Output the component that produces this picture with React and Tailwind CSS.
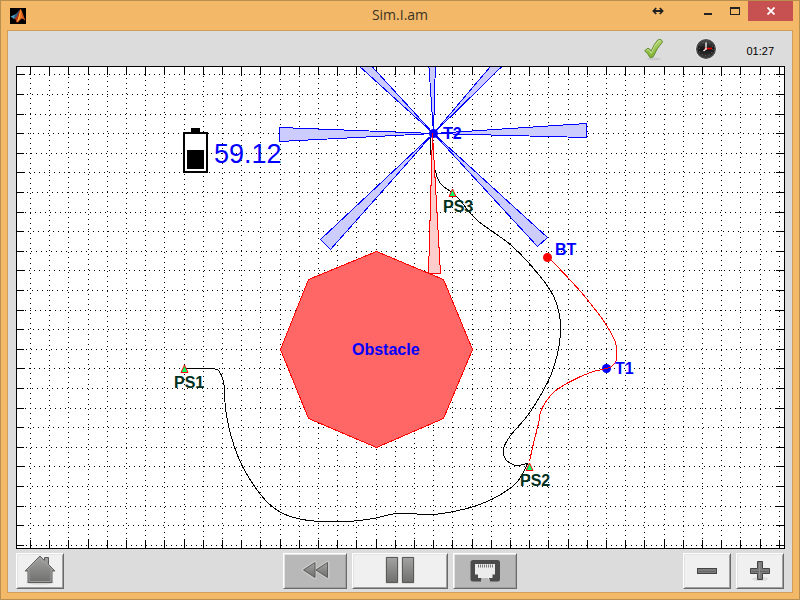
import React, { useState } from 'react';

// Plot area, in plot units
const LEFT = 16;
const TOP = 66;
const RIGHT = 785;
const BOTTOM = 549;

const columns = [...Array(40)].map((_, i) => Math.round(30 + i * 19.2));
const rows = [...Array(25)].map((_, i) => Math.round(74.4 + i * 19.6));

const beams = [
  '433,133 586,123 586,137',
  '433,133 279,127 279,141',
  '433,133 547,237 537,246',
  '433,133 320,239 330,249',
  '433,133 325,35 331,22',
  '433,133 423,-13 437,-13',
  '433,133 529,20 534,34',
];

const outboundPath = [
  [184, 368], [212, 368], [220, 373], [224, 387], [225, 408], [231, 437], [242, 466],
  [260, 494], [277, 510], [297, 518], [320, 521], [347, 521], [373, 518], [397, 513],
  [432, 514], [453, 511], [473, 506], [493, 498], [512, 486], [520, 477], [527, 463],
];

const returnPath = [
  [527, 463], [517, 465], [510, 463], [504, 457], [503, 448], [510, 435], [530, 411],
  [551, 373], [560, 333], [556, 303], [543, 280], [512, 246], [477, 220], [458, 198],
  [450, 191], [443, 186], [438, 180], [435, 171], [430, 152], [430, 134],
];

const plannedPath = [
  [547, 257], [552, 261], [580, 291], [600, 316], [608, 328], [615, 342], [616, 352],
  [616, 360], [611, 366], [606, 368], [590, 372], [568, 382], [552, 393], [541, 409],
  [538, 423], [533, 443], [529, 461],
];

const stations = [
  { name: 'PS1', x: 184, y: 368, labelX: 174, labelY: 388 },
  { name: 'PS2', x: 529, y: 466, labelX: 520, labelY: 486 },
  { name: 'PS3', x: 452, y: 192, labelX: 443, labelY: 212 },
];

const targets = [
  { name: 'T1', x: 615, y: 374 },
  { name: 'T2', x: 443, y: 139 },
  { name: 'BT', x: 555, y: 255 },
];

// Catmull-Rom spline through the points
const smooth = (points) => {
  let d = `M${points[0][0] + 0.5} ${points[0][1] + 0.5}`;
  for (let i = 0; i < points.length - 1; i++) {
    const p0 = points[i - 1] || points[i];
    const p1 = points[i];
    const p2 = points[i + 1];
    const p3 = points[i + 2] || p2;
    const c = [0, 1].map((k) => p1[k] + (p2[k] - p0[k]) / 6 + 0.5);
    const e = [0, 1].map((k) => p2[k] - (p3[k] - p1[k]) / 6 + 0.5);
    d += `C${c[0]} ${c[1]} ${e[0]} ${e[1]} ${p2[0] + 0.5} ${p2[1] + 0.5}`;
  }
  return d;
};

const Grid = () => (
  <g stroke="#000" shapeRendering="crispEdges">
    {columns.map((x, i) => (
      <g key={x}>
        <line x1={x + 0.5} x2={x + 0.5} y1={65 + ((3 + 2 * i) % 5)} y2={BOTTOM} strokeDasharray="1 4" />
        <line x1={x + 0.5} x2={x + 0.5} y1={TOP} y2={TOP + 9} />
        <line x1={x + 0.5} x2={x + 0.5} y1={BOTTOM - 9} y2={BOTTOM} />
      </g>
    ))}
    {rows.map((y, i) => (
      <g key={y}>
        <line x1={15 + ((4 + 3 * i) % 5)} x2={RIGHT} y1={y + 0.5} y2={y + 0.5} strokeDasharray="1 4" />
        <line x1={LEFT} x2={LEFT + 8} y1={y + 0.5} y2={y + 0.5} />
        <line x1={RIGHT - 9} x2={RIGHT} y1={y + 0.5} y2={y + 0.5} />
      </g>
    ))}
  </g>
);

const Battery = ({ level }) => (
  <g>
    <g shapeRendering="crispEdges">
      <rect x="191" y="128" width="9" height="5" />
      <rect x="184" y="133" width="23" height="39" fill="#fff" stroke="#000" strokeWidth="2" />
      <rect x="187" y="150" width="17" height="19" />
    </g>
    <text x="214" y="163" fontSize="27" fill="#00f">{level}</text>
  </g>
);

const Plot = () => (
  <svg
    viewBox={`${LEFT} ${TOP} ${RIGHT - LEFT} ${BOTTOM - TOP}`}
    className="block w-full h-auto bg-white font-['Liberation_Sans',Arial,sans-serif]"
    role="img"
    aria-label="Map"
  >
    <Grid />

    {/* Obstacle */}
    <polygon
      points="376.5,251.5 443.5,279.5 472.5,349.5 443.5,418.5 376.5,447.5 308.5,418.5 280.5,349.5 308.5,279.5"
      fill="#f66"
      stroke="#f00"
      shapeRendering="crispEdges"
    />

    {/* Paths */}
    <g fill="none" stroke="#000" shapeRendering="crispEdges">
      <path d={smooth(outboundPath)} />
      <path d={smooth(returnPath)} />
    </g>

    {/* Sensor beams */}
    <g fill="#ccf" stroke="#00f" shapeRendering="crispEdges" transform="translate(0.5 0.5)">
      {beams.map((points) => (
        <polygon key={points} points={points} />
      ))}
    </g>
    <circle cx="433.5" cy="133.5" r="4.5" fill="#00f" />
    <polygon points="432.5,133.5 428.5,273.5 440.5,273.5" fill="#fcc" stroke="#f00" shapeRendering="crispEdges" />

    {/* Targets */}
    <circle cx="606.5" cy="368.5" r="4.5" fill="#00f" />
    <path d={smooth(plannedPath)} fill="none" stroke="#f00" shapeRendering="crispEdges" />
    <circle cx="547.5" cy="257.5" r="4.5" fill="#f00" />

    {/* Stations */}
    {stations.map((s) => (
      <g key={s.name}>
        <polygon
          points={`${s.x + 0.5},${s.y - 3} ${s.x + 4},${s.y + 4.5} ${s.x - 3},${s.y + 4.5}`}
          fill="#00ff66"
          stroke="#f00"
        />
        <text x={s.labelX} y={s.labelY} fontSize="16" fontWeight="bold" fill="#003020">{s.name}</text>
      </g>
    ))}

    <g fontSize="16" fontWeight="bold" fill="#00f">
      {targets.map((t) => (
        <text key={t.name} x={t.x} y={t.y}>{t.name}</text>
      ))}
      <text x="352" y="355">Obstacle</text>
    </g>

    <Battery level="59.12" />

    <rect
      x={LEFT + 0.5}
      y={TOP + 0.5}
      width={RIGHT - LEFT - 1}
      height={BOTTOM - TOP - 1}
      fill="none"
      stroke="#000"
      shapeRendering="crispEdges"
    />
  </svg>
);

const LogoIcon = () => (
  <svg viewBox="0 0 16 16" className="w-4 h-4 bg-black">
    <path d="M0.5 8.5 L5 6.5 L7.5 5 L6.5 9 L4 11 Z" fill="#4d9cc4" />
    <path d="M5 6.5 C7 6 8 3.5 9.5 1.5 L8 9 L5.5 11 L4 10.5 Z" fill="#2c5f7c" />
    <path d="M10.3 1 C9 2.5 8 7 6 9.5 L4.2 11 C6 11 6 13 7 14.5 C9 14 9.5 11.5 11.5 10.5 L12 6 Z" fill="#b8311c" />
    <path d="M10.3 1 C9.8 5 9 9 6.5 13.5 L7 14.5 C9 14 9.5 11.5 11.5 10.5 C13 10 14 12 15.3 12.5 C13.5 8 12 2 10.3 1 Z" fill="#ef7622" />
    <path d="M10.3 1.5 C10.5 5 10 8 9 11 L7 14 C8.5 10 9.5 6 10.3 1.5 Z" fill="#fcc543" />
    <path d="M11 3 C12 6 13.5 9 15 12 L12.5 9.5 Z" fill="#c43a1d" />
  </svg>
);

const TitleBar = () => (
  <header className="grid grid-cols-[1fr_auto_1fr] items-center h-[29px] pl-[3px] pr-[3px]">
    <LogoIcon />
    <h1 className="text-sm pb-0.5 text-[#3b3325] font-['Open_Sans',sans-serif]">Sim.I.am</h1>
    <div className="flex justify-end self-start h-5 -mr-[3px]">
      <button aria-label="Resize" className="flex items-center justify-center w-7 mr-[22px]">
        <svg viewBox="0 0 12 8" className="w-3 h-2" stroke="#222" strokeWidth="1.8" fill="none">
          <path d="M1.5 4 H10.5 M4.2 1 L1.4 4 L4.2 7 M7.8 1 L10.6 4 L7.8 7" />
        </svg>
      </button>
      <button aria-label="Minimize" className="flex items-center justify-center w-[27px]">
        <svg viewBox="0 0 10 10" className="w-[10px] h-[10px]">
          <rect x="1" y="7" width="8" height="2" fill="#222" />
        </svg>
      </button>
      <button aria-label="Maximize" className="flex items-center justify-center w-[27px]">
        <svg viewBox="0 0 10 10" className="w-[10px] h-[10px]" fill="#222">
          <path fillRule="evenodd" d="M0 1 H10 V9 H0 Z M1 3 V8 H9 V3 Z" />
        </svg>
      </button>
      <button aria-label="Close" className="flex items-center justify-center w-[45px] bg-[#c75050]">
        <svg viewBox="0 0 8 8" className="w-2 h-2" stroke="#fff" strokeWidth="1.8">
          <path d="M0.5 0.5 L7.5 7.5 M7.5 0.5 L0.5 7.5" />
        </svg>
      </button>
    </div>
  </header>
);

const CheckIcon = () => (
  <svg viewBox="0 0 24 24" className="w-6 h-6">
    <defs>
      <linearGradient id="check" x1="0" y1="0" x2="0" y2="1">
        <stop offset="0" stopColor="#b4d672" />
        <stop offset="1" stopColor="#7fb02e" />
      </linearGradient>
    </defs>
    <ellipse cx="12" cy="21" rx="7" ry="1.5" fill="#cbcbcb" />
    <path
      d="M2.6 12.8 L6 10.2 Q8.2 11 9.2 13 Q12 6 15.8 1.9 L19 1.5 L20.6 3.8 Q14.5 10.5 11.2 18.8 L8.2 19.8 Q6.2 15.5 2.6 12.8 Z"
      fill="url(#check)"
      stroke="#5f8c2c"
      strokeLinejoin="round"
    />
    <path d="M4.4 12.6 L6 11.4 Q8 12.6 9.2 15.4 Q12.2 7.2 16.4 2.9 L18.4 2.6" fill="none" stroke="#d2e8a4" strokeWidth="0.8" />
  </svg>
);

const ClockIcon = () => (
  <svg viewBox="0 0 24 24" className="w-6 h-6">
    <defs>
      <linearGradient id="face" x1="0" y1="0" x2="0" y2="1">
        <stop offset="0" stopColor="#4c4c4c" />
        <stop offset="0.5" stopColor="#151515" />
        <stop offset="1" stopColor="#3a3a3a" />
      </linearGradient>
    </defs>
    <circle cx="12" cy="11" r="10.6" fill="#f4f4f4" />
    <circle cx="12" cy="11" r="9.2" fill="url(#face)" stroke="#4a4a4a" strokeWidth="1.6" />
    <circle cx="12" cy="11" r="6.8" fill="none" stroke="#8c8c8c" strokeWidth="1" strokeDasharray="0.8 2.76" />
    <path d="M12 4.5 V11 L9.5 13" fill="none" stroke="#fff" strokeWidth="1.3" />
    <path d="M10.5 10.5 H18" stroke="#f00000" strokeWidth="1.6" />
    <circle cx="12" cy="10.8" r="1" fill="#ddd" />
  </svg>
);

const StatusBar = ({ time }) => (
  <div className="flex items-center justify-end gap-7 h-[35px] pt-0.5 pr-[11px]">
    <CheckIcon />
    <ClockIcon />
    <time className="pt-1 text-[11px] text-black font-['Liberation_Sans',Arial,sans-serif]">{time}</time>
  </div>
);

const HomeIcon = () => (
  <svg viewBox="0 0 32 32" className="w-8 h-8">
    <ellipse cx="16" cy="27.5" rx="14" ry="2" fill="#d4d4d4" />
    <path
      d="M16 1 L20.5 5.5 V2.5 H24.5 V9.5 L30.8 16 H28 V27.5 H4 V16 H1.2 Z"
      fill="url(#metal)"
      stroke="#5c5c5c"
    />
    <path d="M5 26.5 V15 H3.5 L16 2.5 L28.5 15 H27 V26.5 Z" fill="none" stroke="#a9a9a9" strokeWidth="0.8" />
  </svg>
);

const RewindIcon = () => (
  <svg viewBox="0 0 32 32" className="w-8 h-8" strokeLinejoin="round">
    <path d="M4 15 L16 7 V23 Z M17 15 L29 7 V23 Z" fill="none" stroke="#c9c9c9" strokeWidth="3" />
    <path d="M4.5 15 L16 7.5 V22.5 Z M17 15 L28.5 7.5 V22.5 Z" fill="url(#metal)" stroke="#5c5c5a" />
  </svg>
);

const PauseIcon = () => (
  <svg viewBox="0 0 32 32" className="w-8 h-8">
    <path d="M1.5 1.5 H14.5 V28.5 H1.5 Z M17.5 1.5 H30.5 V28.5 H17.5 Z" fill="#ccc" />
    <path d="M2.5 2.5 H13.5 V27.5 H2.5 Z M18.5 2.5 H29.5 V27.5 H18.5 Z" fill="url(#metal)" stroke="#5a5a58" />
  </svg>
);

const NetworkIcon = () => (
  <svg viewBox="0 0 32 32" className="w-8 h-8">
    <path
      fill="#4b4b4b"
      d="M4 5 H28.5 Q31 5 31 7.5 V24 Q31 26.5 28.5 26.5 H21 V24.5 H12 V26.5 H4 Q1.5 26.5 1.5 24 V7.5 Q1.5 5 4 5 Z"
    />
    <path fill="#ececec" d="M6 9 H26 V19.5 H23.5 V23 H20 V24.5 H12.5 V23 H9 V19.5 H6 Z" />
    <path fill="#b8b8b8" d="M13.5 23 H19 V24.5 H21 V27 H12 V24.5 H13.5 Z" />
    <path d="M9 11 H24" stroke="#777" strokeWidth="3" strokeDasharray="1 1" />
  </svg>
);

const MinusIcon = () => (
  <svg viewBox="0 0 32 32" className="w-8 h-8">
    <rect x="6.5" y="13.5" width="19" height="5" fill="#7c7c7c" stroke="#444" />
    <path d="M8 16.5 H24" stroke="#666" />
  </svg>
);

const PlusIcon = () => (
  <svg viewBox="0 0 32 32" className="w-8 h-8">
    <ellipse cx="16" cy="24" rx="8" ry="2" fill="#dcdcdc" />
    <path
      d="M13.5 6.5 H18.5 V13.5 H25.5 V18.5 H18.5 V24.5 H13.5 V18.5 H6.5 V13.5 H13.5 Z"
      fill="#7c7c7c"
      stroke="#444"
    />
    <path d="M8 16.5 H24" stroke="#666" />
    <path d="M15.5 8 V23" stroke="#909090" />
  </svg>
);

const ToolButton = ({ label, className, onClick, children }) => (
  <button
    aria-label={label}
    onClick={onClick}
    className={`flex items-center justify-center h-9 border border-t-white border-l-white border-r-[#696969] border-b-[#696969] shadow-[inset_1px_1px_0_#e3e3e3,inset_-1px_-1px_0_#a0a0a0] ${className}`}
  >
    {children}
  </button>
);

const App = () => {
  const [running, setRunning] = useState(true);

  return (
    <div className="min-h-screen flex flex-col bg-[#f3b969] border border-[#b98f50] px-1.5 pb-1.5">
      {/* Shared icon gradient */}
      <svg className="absolute w-0 h-0" aria-hidden="true">
        <defs>
          <linearGradient id="metal" x1="0" y1="0" x2="0" y2="1">
            <stop offset="0" stopColor="#a3a3a1" />
            <stop offset="1" stopColor="#6f6f6d" />
          </linearGradient>
        </defs>
      </svg>

      <TitleBar />

      <main className="flex-1 flex flex-col bg-[#dcdcdc] border border-[#cf9e5a] pl-2 pr-[7px]">
        <StatusBar time="01:27" />
        <Plot />

        <div className="grid grid-cols-[1fr_auto_1fr] pt-1 pb-[3px] pr-px">
          <div>
            <ToolButton label="Home" className="w-12 bg-[#f0f0f0]">
              <HomeIcon />
            </ToolButton>
          </div>
          <div className="flex gap-[5px]">
            <ToolButton label="Rewind" className="w-16 bg-[#b8b8b8]">
              <RewindIcon />
            </ToolButton>
            <ToolButton label={running ? 'Pause' : 'Play'} className="w-24 bg-[#f0f0f0]" onClick={() => setRunning(!running)}>
              <PauseIcon />
            </ToolButton>
            <ToolButton label="Network" className="w-16 bg-[#b8b8b8]">
              <NetworkIcon />
            </ToolButton>
          </div>
          <div className="flex justify-end gap-[5px]">
            <ToolButton label="Zoom out" className="w-12 bg-[#f0f0f0]">
              <MinusIcon />
            </ToolButton>
            <ToolButton label="Zoom in" className="w-12 bg-[#f0f0f0]">
              <PlusIcon />
            </ToolButton>
          </div>
        </div>
      </main>
    </div>
  );
};

export default App;
